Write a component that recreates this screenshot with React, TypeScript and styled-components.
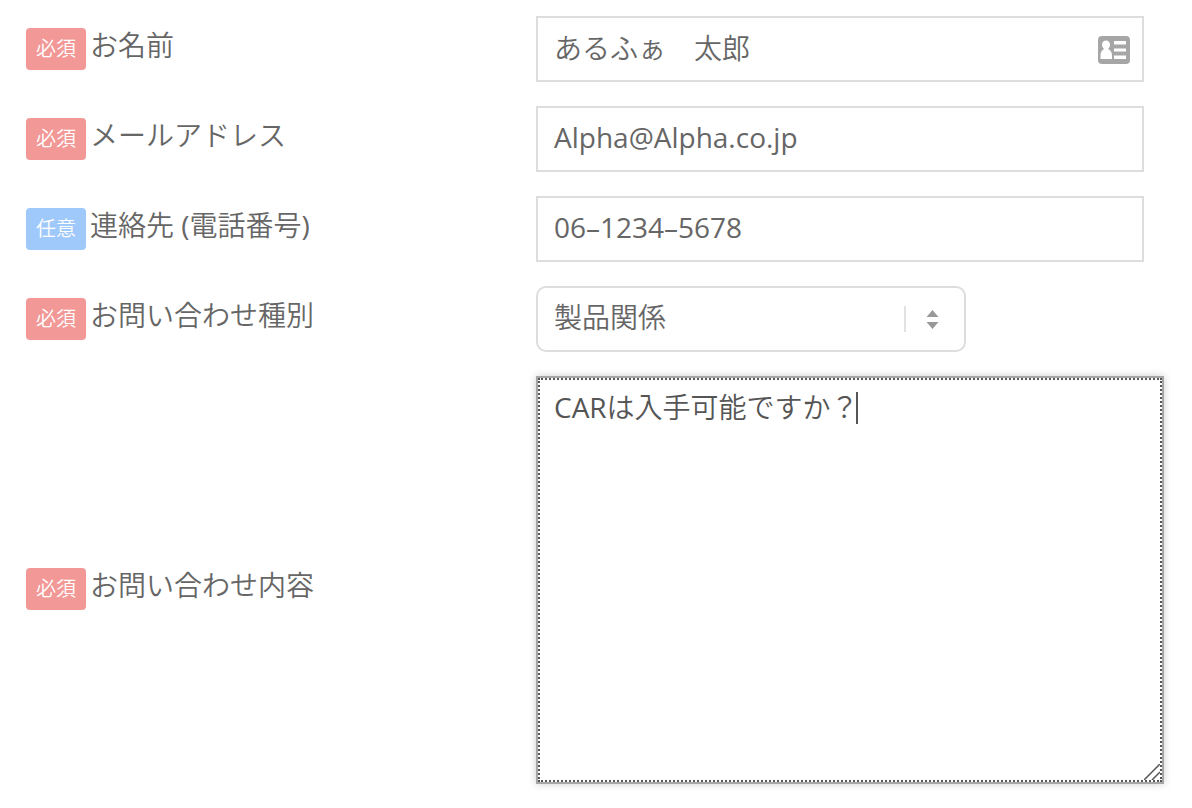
import React from "react";
import styled, { createGlobalStyle } from "styled-components";

const GlobalStyle = createGlobalStyle`
  * { box-sizing: border-box; }
  body {
    margin: 0;
    background: #fff;
    color: #666;
    font-family: "Open Sans", "Noto Sans CJK JP DemiLight", "Noto Sans CJK JP", sans-serif;
    font-size: 28px;
    font-weight: 400;
    line-height: 34px;
  }
`;

const Form = styled.form`
  display: flex;
  flex-direction: column;
  gap: 24px;
  padding: 16px 28px 0 26px;
`;

const Row = styled.div`
  display: grid;
  grid-template-columns: minmax(0, 510fr) minmax(0, 628fr);
  align-items: center;
`;

const Label = styled.label`
  display: flex;
  align-items: flex-start;
  gap: 4px;
`;

const Badge = styled.span<{ $optional?: boolean }>`
  flex: none;
  padding: 0 10px;
  border-radius: 4px;
  background: ${(p) => (p.$optional ? "#9fc8fb" : "#f29896")};
  color: #fff;
  font-size: 20px;
  font-weight: 300;
  line-height: 42px;
`;

const Field = styled.div`
  position: relative;
  margin-right: 20px;
`;

const TextInput = styled.input`
  display: block;
  width: 100%;
  height: 66px;
  padding: 0 16px 4px;
  border: 2px solid #ddd;
  border-radius: 0;
  background: #fff;
  color: #666;
  font: inherit;
  outline: none;
`;

const ContactButton = styled.button`
  position: absolute;
  top: 20px;
  right: 14px;
  display: block;
  padding: 0;
  border: 0;
  background: none;
  line-height: 0;
`;

const SelectField = styled.div`
  position: relative;
  width: 430px;
  max-width: 100%;
`;

const Select = styled.select`
  display: block;
  width: 100%;
  height: 66px;
  padding: 0 64px 4px 16px;
  border: 2px solid #ddd;
  border-radius: 10px;
  background: #fff;
  color: #666;
  font: inherit;
  appearance: none;
`;

const SelectArrows = styled.svg`
  position: absolute;
  top: 20px;
  right: 24px;
  pointer-events: none;
`;

const AreaField = styled.div`
  position: relative;
  padding-bottom: 18px;
`;

const TextArea = styled.textarea`
  display: block;
  width: 100%;
  height: 408px;
  padding: 12px 16px;
  border: 2px solid #a6a6a6;
  border-radius: 0;
  outline: 2px dotted #555;
  outline-offset: -4px;
  box-shadow: 0 0 8px rgba(0, 0, 0, 0.2);
  background: #fff;
  color: #555;
  font: inherit;
  resize: none;
`;

const Caret = styled.span`
  position: absolute;
  top: 16px;
  left: 320px;
  width: 2px;
  height: 32px;
  background: #555;
`;

const Grip = styled.svg`
  position: absolute;
  right: 4px;
  bottom: 22px;
  pointer-events: none;
`;

interface LabelProps {
  id: string;
  optional?: boolean;
  children: React.ReactNode;
}

function FieldLabel({ id, optional, children }: LabelProps) {
  return (
    <Label htmlFor={id}>
      <Badge $optional={optional}>{optional ? "任意" : "必須"}</Badge>
      <span>{children}</span>
    </Label>
  );
}

export default function App() {
  return (
    <>
      <GlobalStyle />
      <Form>
        <Row>
          <FieldLabel id="name">お名前</FieldLabel>
          <Field>
            <TextInput id="name" defaultValue="あるふぁ　太郎" />
            <ContactButton type="button" aria-label="連絡先">
              <svg width="32" height="28" viewBox="0 0 32 28">
                <rect width="32" height="28" rx="4" fill="#a6a6a6" />
                <path
                  fill="#fff"
                  d="M8 4.500c2.400 0 4 1.900 4 4.300 0 1.800-.8 3.300-2 4.200 2.600 1 4 3.500 4 6.500V23H2.500v-3.500c0-3 1.300-5.500 3.700-6.500C4.900 12.100 4 10.600 4 8.800c0-2.400 1.600-4.300 4-4.300z"
                />
                <path fill="#fff" d="M16 5h12v3.500H16zM16 12.500h12v3H16zM16 19.500h12V23H16z" />
              </svg>
            </ContactButton>
          </Field>
        </Row>
        <Row>
          <FieldLabel id="email">メールアドレス</FieldLabel>
          <Field>
            <TextInput id="email" defaultValue="Alpha@Alpha.co.jp" />
          </Field>
        </Row>
        <Row>
          <FieldLabel id="tel" optional>連絡先 (電話番号)</FieldLabel>
          <Field>
            <TextInput id="tel" defaultValue="06–1234–5678" />
          </Field>
        </Row>
        <Row>
          <FieldLabel id="kind">お問い合わせ種別</FieldLabel>
          <SelectField>
            <Select id="kind" defaultValue="製品関係">
              <option>製品関係</option>
            </Select>
            <SelectArrows width="38" height="26" viewBox="0 0 38 26">
              <path fill="#e2e2e2" d="M0 0h2v26H0z" />
              <path fill="#999" d="M28.500 4l6 7h-12zM28.500 23l6-7h-12z" />
            </SelectArrows>
          </SelectField>
        </Row>
        <Row>
          <FieldLabel id="message">お問い合わせ内容</FieldLabel>
          <AreaField>
            <TextArea id="message" defaultValue="CARは入手可能ですか？" />
            <Caret />
            <Grip width="16" height="16" viewBox="0 0 16 16">
              <path d="M0 16L16 0M8 16l8-8" stroke="#555" strokeWidth="1.500" />
            </Grip>
          </AreaField>
        </Row>
      </Form>
    </>
  );
}
